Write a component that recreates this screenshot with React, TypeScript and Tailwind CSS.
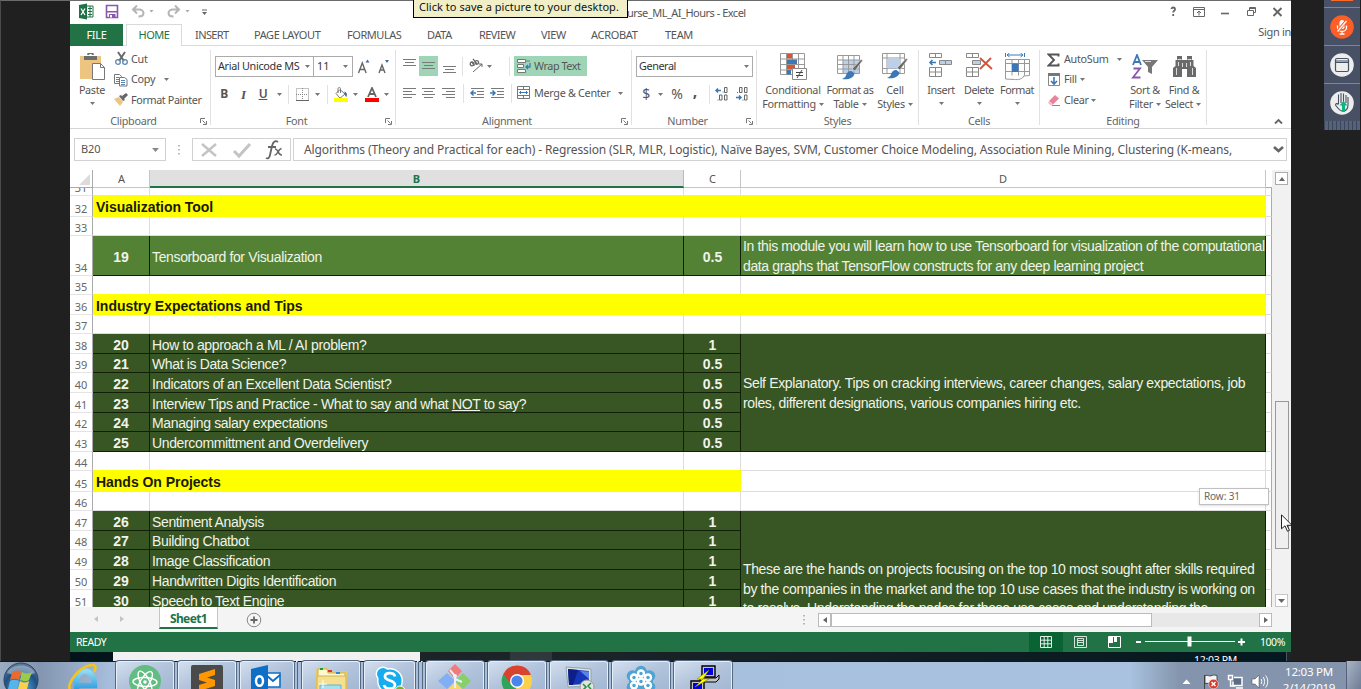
import type { ReactNode } from "react";

type Kids = { className?: string; children?: ReactNode };

const Slot = ({ className = "", children }: Kids) => (
  <div className={`flex shrink-0 items-center justify-center ${className}`}>{children}</div>
);

const Caret = ({ className = "" }: { className?: string }) => (
  <svg className={`shrink-0 ${className}`} width="5" height="3" viewBox="0 0 5 3">
    <path d="M0 0h5L2.5 3z" fill="#777" />
  </svg>
);

const Launcher = () => (
  <svg width="7" height="7" viewBox="0 0 7 7" fill="none" stroke="#777">
    <path d="M.5 5V.5H5M2.5 2.5l3 3M6.500 3v3.500H3" />
  </svg>
);

const Sep = () => <div className="h-[19px] w-px shrink-0 bg-[#e1e1e1]" />;

function Group({ label, className, launcher, labelClass = "", children }: Kids & { label: string; launcher?: boolean; labelClass?: string }) {
  return (
    <div className={`mt-[4px] flex h-[75px] shrink-0 flex-col border-r border-[#e1e1e1] ${className}`}>
      <div className="h-[64px] shrink-0">{children}</div>
      <div className="flex h-[14px] shrink-0 items-center justify-center text-[#666]">
        <span className={`flex-1 text-center ${labelClass}`}>{label}</span>
        {launcher && (
          <div className="-ml-[11px] mr-[3px]">
            <Launcher />
          </div>
        )}
      </div>
    </div>
  );
}

const Lines = ({ rows }: { rows: [number, number, number][] }) => (
  <svg width="14" height="20" viewBox="0 0 14 20" stroke="#7a7a7a">
    {rows.map(([x1, x2, y]) => (
      <path key={y} d={`M${x1} ${y}H${x2}`} />
    ))}
  </svg>
);

function BigButton({ icon, top, bottom, className = "", topClass = "", bottomClass = "" }: { icon: ReactNode; top: string; bottom?: string; className?: string; topClass?: string; bottomClass?: string }) {
  return (
    <div className={`flex shrink-0 flex-col items-center whitespace-nowrap ${className}`}>
      <div className="flex h-[31px] items-end justify-center pt-[2px]">{icon}</div>
      <div className={`mt-[2px] flex h-[14px] items-center ${topClass}`}>{top}</div>
      <div className="flex h-[14px] items-center gap-[3px]">
        {bottom && <span className={bottomClass}>{bottom}</span>}
        <Caret className={bottom ? "" : "-mt-[2px]"} />
      </div>
    </div>
  );
}

/* ---------- title bar and tabs ---------- */

function TitleBar() {
  return (
    <div className="flex h-[23px] shrink-0 items-center">
      <svg width="150" height="23" viewBox="70 1 150 23">
        <path d="M79 5l8-1.500v16L79 18z" fill="#1f7245" />
        <path d="M87 6h6v11h-6" fill="#fff" stroke="#1f7245" />
        <path d="M88 8.500h4M88 11.500h4M88 14.500h4M90 6v11" stroke="#1f7245" />
        <path d="M81 8.500l4 6.500M85 8.500l-4 6.500" stroke="#fff" strokeWidth="1.300" />
        <path d="M106.500 5.500h11v12h-11z" fill="#fff" stroke="#8957ab" strokeWidth="1.600" />
        <path d="M107 11h10v1.500h-10z" fill="#8957ab" />
        <path d="M109 14h6.500v4H109z" fill="#8957ab" />
        <path d="M110 15h2v2.500h-2z" fill="#fff" />
        <g fill="none" stroke="#b5b5b5" strokeWidth="2">
          <path d="M137 5l-4 4 4 4M133 9h6c3 0 4.500 2 4.500 3.500 0 2.500-2 3.500-5 3.500" transform="translate(0 .5)" />
          <path d="M175 5l4 4-4 4M179 9h-6c-3 0-4.500 2-4.500 3.500 0 2.500 2 3.500 5 3.500" transform="translate(0 .5)" />
        </g>
        <path d="M149.500 10h4l-2 2.500zM185.500 10h4l-2 2.500z" fill="#aaa" />
        <path d="M202 9.500h5v1h-5zM202 12h5l-2.500 3z" fill="#666" />
      </svg>
      <span className="ml-[407px] w-[130px] whitespace-nowrap text-[11px] leading-none tracking-[-0.5px] text-[#555]">urse_ML_AI_Hours - Excel</span>
      <svg className="ml-auto" width="131" height="23" viewBox="1160 1 131 23" fill="none" stroke="#666">
        <path d="M1171.500 9c0-1 .7-1.500 1.700-1.500s1.800.6 1.800 1.700c0 1.600-1.800 1.500-1.800 3.300M1173.200 14v2" strokeWidth="1.800" />
        <path d="M1193.500 7.500h11v9h-11zM1193.500 9.500h11M1199 15.500v-4M1197 13l2-2 2 2" />
        <path d="M1221 13.500h8" strokeWidth="1.600" />
        <path d="M1247.500 10.500h6v5h-6zM1249.500 10V7.500h6v5H1254M1249.500 8.500h6" />
        <path d="M1273.500 8l8 8M1281.500 8l-8 8" strokeWidth="1.900" />
      </svg>
    </div>
  );
}

function Tabs() {
  return (
    <div className="flex h-[22px] shrink-0 items-stretch whitespace-nowrap text-[11px] text-[#555]">
      <Slot className="w-[53px] bg-[#217346] tracking-[-0.3px] text-white">FILE</Slot>
      <div className="w-[3px] border-b border-[#dadada]" />
      <Slot className="w-[56px] border-x border-t border-[#dadada] tracking-[-0.45px] text-[#217346]">HOME</Slot>
      <div className="flex flex-1 items-center border-b border-[#dadada] pt-[2px]">
        <span className="ml-[13px] w-[59px] tracking-[-0.6px]">INSERT</span>
        <span className="w-[93px] tracking-[-0.4px]">PAGE LAYOUT</span>
        <span className="w-[80px] tracking-[-0.45px]">FORMULAS</span>
        <span className="w-[52px] tracking-[-0.4px]">DATA</span>
        <span className="w-[62px] tracking-[-0.6px]">REVIEW</span>
        <span className="w-[50px] tracking-[-0.5px]">VIEW</span>
        <span className="w-[74px] tracking-[-0.3px]">ACROBAT</span>
        <span className="w-[60px] tracking-[-0.3px]">TEAM</span>
        <span className="-mt-[6px] ml-auto tracking-[-0.3px]">Sign in</span>
      </div>
    </div>
  );
}

/* ---------- ribbon ---------- */

function Clipboard() {
  return (
    <Group label="Clipboard" launcher className="w-[141px]" labelClass="-ml-[14px]">
      <div className="flex">
        <BigButton
          className="ml-[8px] w-[28px]"
          top="Paste"
          icon={
            <svg width="28" height="28" viewBox="80 53 28 28">
              <path d="M82 56h21v23H82z" fill="#edc581" />
              <path d="M86 56h13v4H86z" fill="#6d6d6d" />
              <path d="M90 55a2.500 2 0 015 0" fill="none" stroke="#6d6d6d" strokeWidth="1.800" />
              <path d="M94.500 63.500h8l4 4v12h-12z" fill="#fff" stroke="#777" />
              <path d="M102.500 63.500v4h4" fill="none" stroke="#777" />
            </svg>
          }
        />
        <div className="-mt-px ml-[8px] flex flex-col">
          <div className="flex h-[20px] items-center">
            <svg width="17" height="16" viewBox="0 0 17 16" fill="none">
              <path d="M4 1l6 9M11 1l-6 9" stroke="#6a6a6a" strokeWidth="2" />
              <circle cx="4" cy="11" r="2.300" stroke="#5b87b5" strokeWidth="1.300" />
              <circle cx="11" cy="11" r="2.300" stroke="#5b87b5" strokeWidth="1.300" />
            </svg>
            Cut
          </div>
          <div className="flex h-[21px] items-center">
            <svg width="17" height="14" viewBox="0 0 17 14" fill="#fff" stroke="#777">
              <path d="M.5 1.500h5l2 2v7h-7z" />
              <path d="M5.500 4.500h5l2.500 2v6.500H5.500z" />
              <path d="M2 4.500h3M2 6.500h3M2 8.500h3M7 7.500h4M7 9.500h4M7 11.500h4" stroke="#5b87b5" />
            </svg>
            Copy
            <Caret className="ml-[9px]" />
          </div>
          <div className="flex h-[20px] items-center whitespace-nowrap tracking-[-0.38px]">
            <svg width="17" height="14" viewBox="0 0 17 14">
              <path d="M0 6l5-2 4 5-3 4z" fill="#edc581" />
              <path d="M5 3l2-1 4 5-2 1zM8 3l4-3 2 2-4 4z" fill="#666" />
            </svg>
            Format Painter
          </div>
        </div>
      </div>
    </Group>
  );
}

function FontGroup() {
  return (
    <Group label="Font" launcher className="w-[185px]" labelClass="-ml-[14px]">
      <div className="flex items-center pt-[6px]">
        <div className="ml-[4px] flex h-[21px] w-[99px] items-center whitespace-nowrap border border-[#ababab] pl-[2px] text-[#333]">
          <span className="w-[87px] tracking-[-0.3px]">Arial Unicode MS</span>
          <Caret />
        </div>
        <div className="flex h-[21px] w-[39px] items-center border border-l-0 border-[#ababab] pl-[3px] text-[#333]">
          <span className="w-[26px] tracking-normal">11</span>
          <Caret />
        </div>
        <svg className="ml-[4px]" width="34" height="20" viewBox="0 0 34 20" fill="none" stroke="#666">
          <path d="M1.500 16L5.300 6l3.800 10M3 12.500h5" strokeWidth="1.400" />
          <path d="M8.500 5.500h4l-2-3z" fill="#40699c" stroke="none" />
          <path d="M22 16l3-8 3 8M23.200 13h4" strokeWidth="1.400" />
          <path d="M28 3h4l-2 3z" fill="#40699c" stroke="none" />
        </svg>
      </div>
      <div className="mt-[7px] flex h-[20px] items-center text-[#555]">
        <Slot className="ml-[3px] w-[20px] text-[12px] font-bold">B</Slot>
        <Slot className="w-[19px] font-['Liberation_Serif',serif] text-[13px] font-bold italic">I</Slot>
        <Slot className="w-[20px] text-[12px] font-semibold underline">U</Slot>
        <Slot className="w-[12px]"><Caret /></Slot>
        <Slot className="w-[7px]"><Sep /></Slot>
        <Slot className="w-[21px]">
          <svg width="13" height="13" viewBox="0 0 13 13" fill="none" stroke="#888">
            <path d="M.5.5h12v12H.5zM6.500 0v12M0 6.500h12" strokeDasharray="1 1" />
            <path d="M0 12.500h13" stroke="#666" />
          </svg>
        </Slot>
        <Slot className="w-[11px]"><Caret className="mr-[2px]" /></Slot>
        <Slot className="w-[7px]"><Sep /></Slot>
        <Slot className="w-[20px]">
          <svg width="16" height="15" viewBox="0 0 16 15">
            <path d="M3 6.500l4-4 5 4.500-5 4.200z" fill="#fff" stroke="#777" />
            <path d="M5 6V1.500C5 .3 7.500.3 7.500 1.500V6" fill="none" stroke="#777" />
            <path d="M11.500 4.500c2 .5 3 2.500 2 5.500-1.500-.5-2-3-2-5.500z" fill="#40699c" />
            <path d="M1 11h14v4H1z" fill="#ff0" />
          </svg>
        </Slot>
        <Slot className="w-[8px]"><Caret /></Slot>
        <Slot className="w-[25px]">
          <svg width="14" height="15" viewBox="0 0 14 15">
            <path d="M3 10l4-9 4 9M4.500 7h5" fill="none" stroke="#666" strokeWidth="1.800" />
            <path d="M0 11h14v4H0z" fill="#f00" />
          </svg>
        </Slot>
        <Caret />
      </div>
    </Group>
  );
}

const Indent = ({ out }: { out?: boolean }) => (
  <svg width="15" height="12" viewBox="0 0 15 12" stroke="#7a7a7a">
    <path d="M1 1.500h13M7 4.500h7M7 7.500h7M1 10.500h13" />
    <path d={out ? "M6 6H1M3.500 3.500L1 6l2.500 2.500" : "M0 6h5M2.500 3.500L5 6 2.500 8.500"} fill="none" stroke="#3c78b5" strokeWidth="1.500" />
  </svg>
);

function Alignment() {
  return (
    <Group label="Alignment" launcher className="w-[236px]" labelClass="-ml-[14px]">
      <div className="flex items-center pt-[6px]">
        <Slot className="ml-[4px] w-[19px]"><Lines rows={[[0, 13, 3.5], [2, 11, 6.5], [0, 13, 9.5]]} /></Slot>
        <Slot className="h-[20px] w-[19px] bg-[#9fd5b7]"><Lines rows={[[0, 13, 6.5], [2, 11, 9.5], [0, 13, 12.5]]} /></Slot>
        <Slot className="ml-[2px] w-[19px]"><Lines rows={[[0, 13, 10.5], [2, 11, 13.5], [0, 13, 16.5]]} /></Slot>
        <Slot className="w-[7px]"><Sep /></Slot>
        <Slot className="w-[20px]">
          <svg width="16" height="16" viewBox="0 0 16 16" fill="none" stroke="#666">
            <circle cx="4" cy="6" r="1.800" strokeWidth="1.300" />
            <path d="M3.500 3.500l3 4M5 .8l4 5" strokeWidth="1.300" />
            <circle cx="8.800" cy="4.500" r="1.800" strokeWidth="1.300" />
            <path d="M5 14l9-8M14 9V6h-3" />
          </svg>
        </Slot>
        <Slot className="w-[6px]"><Caret /></Slot>
        <Slot className="ml-[13px] w-[9px]"><Sep /></Slot>
        <div className="flex h-[20px] w-[73px] items-center whitespace-nowrap bg-[#9fd5b7] pl-[3px]">
          <svg className="mr-[3px]" width="14" height="14" viewBox="0 0 14 14" fill="#fff" stroke="#777">
            <path d="M.5.5h8v3h-8zM.5 5.500h6v3h-6zM.5 10.500h8v3h-8zM8 2h5" />
            <path d="M13 4v4H9M11 6L9 8l2 2" fill="none" stroke="#3c78b5" strokeWidth="1.300" />
          </svg>
          <span className="tracking-[-0.45px]">Wrap Text</span>
        </div>
      </div>
      <div className="mt-[7px] flex h-[20px] items-center">
        <Slot className="ml-[4px] w-[19px]"><Lines rows={[[0, 13, 5.5], [0, 9, 8.5], [0, 13, 11.5], [0, 9, 14.5]]} /></Slot>
        <Slot className="w-[20px]"><Lines rows={[[0, 13, 5.5], [2, 11, 8.5], [0, 13, 11.5], [2, 11, 14.5]]} /></Slot>
        <Slot className="w-[20px]"><Lines rows={[[0, 13, 5.5], [4, 13, 8.5], [0, 13, 11.5], [4, 13, 14.5]]} /></Slot>
        <Slot className="w-[8px]"><Sep /></Slot>
        <Slot className="w-[20px]"><Indent out /></Slot>
        <Slot className="w-[20px]"><Indent /></Slot>
        <Slot className="w-[8px]"><Sep /></Slot>
        <svg className="ml-[2px] mr-[3px]" width="14" height="14" viewBox="0 0 14 14" fill="#fff" stroke="#777">
          <path d="M.5.5h12v12H.5zM.5 3.500h12M.5 9.500h12M6.500.5v3M6.500 9.500v3" />
          <path d="M2.500 6.500h8M4 5L2.500 6.500 4 8M9 5l1.500 1.500L9 8" stroke="#3c78b5" fill="none" />
        </svg>
        <span className="w-[84px] whitespace-nowrap pt-px tracking-[-0.3px]">Merge &amp; Center</span>
        <Caret />
      </div>
    </Group>
  );
}

function NumberGroup() {
  return (
    <Group label="Number" launcher className="w-[125px]" labelClass="-ml-[14px]">
      <div className="flex pt-[6px]">
        <div className="ml-[4px] flex h-[21px] w-[117px] items-center border border-[#ababab] pl-[2px] text-[#333]">
          <span className="w-[105px] tracking-[-0.4px]">General</span>
          <Caret />
        </div>
      </div>
      <div className="mt-[7px] flex h-[20px] items-center text-[#555]">
        <Slot className="ml-[8px] w-[12px] text-[14px]">$</Slot>
        <Slot className="w-[16px]"><Caret /></Slot>
        <Slot className="w-[18px] text-[14px]">%</Slot>
        <Slot className="w-[18px] pb-[6px] text-[16px] font-bold leading-none">,</Slot>
        <Slot className="w-[10px]"><Sep /></Slot>
        <svg className="ml-[1px]" width="36" height="14" viewBox="0 0 36 14" fill="none" stroke="#666">
          <path d="M6 3.500H1M3 1.500L1 3.500l2 2" stroke="#3c78b5" strokeWidth="1.500" />
          <path d="M9.500.5h2.500v5H9.500zM4.500 8h2.500v5H4.500zM9.500 8h2.500v5H9.500zM7.500 5h1M2.500 13h1" />
          <path d="M24.500.5h2.500v5h-2.500zM29.500.5h2.500v5h-2.500zM29.500 8h2.500v5h-2.500zM22 5.500h1M27.500 13h1" />
          <path d="M21 10.500h5M24 8.500l2 2-2 2" stroke="#3c78b5" strokeWidth="1.500" />
        </svg>
      </div>
    </Group>
  );
}

const Brush = () => (
  <>
    <path d="M27 6l-8 11-3-2L25 5.500z" fill="#6a6a6a" stroke="#fff" strokeWidth=".5" />
    <path d="M15.500 17l3 2.500C18 24 12 26 6 25c3-1 4-3 4.500-5s3-3.500 5-3z" fill="#3c78b5" />
  </>
);

function Styles() {
  return (
    <Group label="Styles" className="w-[162px]">
      <div className="flex">
        <BigButton
          className="ml-[6px] w-[60px]"
          top="Conditional"
          bottom="Formatting"
          topClass="tracking-[-0.25px]"
          bottomClass="tracking-[-0.3px]"
          icon={
            <svg width="28" height="28" viewBox="0 0 28 28">
              <path d="M1.500.5h24v21h-24zM1.500 6h24M1.500 11.500h24M1.500 17h24M7.500.5v21M13.500.5v21M19.500.5v21" fill="#fff" stroke="#999" />
              <path d="M8 1h5v4.500H8zM8 12h8v4.500H8z" fill="#d65532" />
              <path d="M8 6.500h10v4.500H8zM8 17h4v4.500H8z" fill="#3c78b5" />
              <path d="M13.500 15.500h14v11h-14z" fill="#fff" stroke="#888" />
              <path d="M17 19.500h7M17 22.500h7M23 17l-5 8" stroke="#444" />
            </svg>
          }
        />
        <BigButton
          className="w-[54px]"
          top="Format as"
          bottom="Table"
          topClass="tracking-[-0.4px]"
          icon={
            <svg width="28" height="27" viewBox="0 0 28 27">
              <path d="M1.500 1.500h22v18h-22z" fill="#fff" stroke="#999" />
              <path d="M7 6h16v13H7z" fill="#bdd0e9" />
              <path d="M1.500 6h22M1.500 10.500h22M1.500 15h22M7 1.500v18M12.500 1.500v18M18 1.500v18" stroke="#999" />
              <Brush />
            </svg>
          }
        />
        <BigButton
          className="-ml-[2px] w-[40px]"
          top="Cell"
          bottom="Styles"
          icon={
            <svg width="28" height="28" viewBox="0 0 28 28">
              <path d="M1.500.5h22v20h-22zM1.500 5h22M1.500 15.500h22M6 .5v20M19 .5v20" fill="#fff" stroke="#999" />
              <path d="M6.500 5.500h12v10h-12z" fill="#bdd0e9" />
              <Brush />
            </svg>
          }
        />
      </div>
    </Group>
  );
}

const CellBlocks = () => (
  <path d="M1.500.5h12v4h-12zM7.500.5v4M1.500 14.500h12v9h-12zM7.500 14.500v9M1.500 19h12" fill="#fff" stroke="#888" />
);

function Cells() {
  return (
    <Group label="Cells" className="w-[121px]">
      <div className="flex">
        <BigButton
          className="ml-[4px] w-[36px]"
          top="Insert"
          topClass="tracking-[-0.4px]"
          icon={
            <svg width="26" height="28" viewBox="0 0 26 28">
              <CellBlocks />
              <path d="M11.500 7.500h12v4h-12zM17.500 7.500v4" fill="#bdd0e9" stroke="#888" />
              <path d="M8 9.500H2M4.500 7L2 9.500 4.500 12" fill="none" stroke="#3c78b5" strokeWidth="1.600" />
            </svg>
          }
        />
        <BigButton
          className="w-[40px]"
          top="Delete"
          topClass="tracking-[-0.5px]"
          icon={
            <svg width="28" height="28" viewBox="0 0 28 28">
              <CellBlocks />
              <path d="M7.500 7.500h8v4h-8z" fill="#bdd0e9" stroke="#888" />
              <path d="M15 5l12 11M26 5L15 16" stroke="#d0563c" strokeWidth="1.900" />
            </svg>
          }
        />
        <BigButton
          className="w-[36px]"
          top="Format"
          topClass="tracking-[-0.45px]"
          icon={
            <svg width="27" height="28" viewBox="0 0 27 28" fill="none">
              <path d="M1.500 0v4M20.500 0v4M3 2h16M5.500 0L3 2l2.500 2M16.500 0L19 2l-2.500 2" stroke="#3c78b5" />
              <path d="M1.500 6.500h24v16l-6 .5c0 3-6 4-9 3.500l-9-.5zM1.500 10.500h24M1.500 18.500h24M8 6.500v16M14.500 6.500v16M20.500 6.500v16" fill="#fff" stroke="#999" />
              <path d="M8 10.500h6.500V19H8z" fill="#3c78b5" />
            </svg>
          }
        />
      </div>
    </Group>
  );
}

function Editing() {
  return (
    <Group label="Editing" className="w-[167px]">
      <div className="flex">
        <div className="ml-[7px] flex w-[79px] flex-col whitespace-nowrap">
          <div className="flex h-[19px] items-center">
            <svg className="mr-[4px]" width="13" height="14" viewBox="0 0 13 14">
              <path d="M11.500 3.500v-2H1.500L7 7l-5.500 5.500h10v-2" fill="none" stroke="#555" strokeWidth="1.900" />
            </svg>
            <span className="w-[53px]">AutoSum</span>
            <Caret />
          </div>
          <div className="flex h-[21px] items-center">
            <svg className="ml-[1px] mr-[4px]" width="12" height="13" viewBox="0 0 12 13">
              <path d="M.5.500h11v12H.5z" fill="#fff" stroke="#888" />
              <path d="M0 0h12v3H0z" fill="#777" />
              <path d="M6 4v7M3 8l3 3 3-3" fill="none" stroke="#3c78b5" strokeWidth="1.600" />
            </svg>
            Fill
            <Caret className="ml-[3px]" />
          </div>
          <div className="flex h-[20px] items-center">
            <svg className="ml-[1px] mr-[4px]" width="12" height="12" viewBox="0 0 12 12">
              <path d="M1 7l6-6 4 3.500-6 6z" fill="#e9839a" />
              <path d="M1 7l4 3.500-2 1L0 9z" fill="#f3bcc8" />
              <path d="M4 11.500h8" stroke="#888" />
            </svg>
            Clear
            <Caret className="ml-[2px]" />
          </div>
        </div>
        <BigButton
          className="w-[38px]"
          top="Sort &"
          bottom="Filter"
          icon={
            <svg width="28" height="27" viewBox="0 0 28 27" fill="none">
              <path d="M2 11L6 1l4 10M3.500 8h5" stroke="#3c78b5" strokeWidth="1.800" />
              <path d="M2.500 14.500H9l-7 9h7.500" stroke="#8957ab" strokeWidth="1.800" />
              <path d="M11 6h16l-6 7v7l-4-2v-5z" fill="#777" />
              <path d="M14 7.500h6" stroke="#ddd" />
            </svg>
          }
        />
        <BigButton
          className="w-[38px]"
          top="Find &"
          bottom="Select"
          topClass="pl-[2px]"
          icon={
            <svg className="ml-[2px] mb-[2px]" width="25" height="24" viewBox="0 0 25 24">
              <path d="M5 1h5v4h5V1h5v4h1.500v6l2.500 2v9h-9v-8h-5v8H1v-9l2.500-2V5H5z" fill="#6a6a6a" />
              <path d="M5.500 4.500h4M15.500 4.500h4M4.500 13v7M20.500 13v7M10.500 8v4M14.500 8v4M6.500 7v4M18.500 7v4" stroke="#ddd" />
            </svg>
          }
        />
      </div>
    </Group>
  );
}

function Ribbon() {
  return (
    <div className="flex h-[83px] shrink-0 border-b border-[#d5d5d5] text-[10.8px] leading-none tracking-[-0.3px] text-[#555]">
      <Clipboard />
      <FontGroup />
      <Alignment />
      <NumberGroup />
      <Styles />
      <Cells />
      <Editing />
      <div className="flex flex-1 items-end justify-end pb-[3px] pr-[8px]">
        <svg width="9" height="7" viewBox="0 0 9 7">
          <path d="M1 5.500L4.500 2 8 5.500" fill="none" stroke="#666" strokeWidth="1.800" />
        </svg>
      </div>
    </div>
  );
}

function FormulaBar() {
  return (
    <div className="flex h-[41px] shrink-0 items-start pt-[9px] text-[12px] text-[#555]">
      <div className="ml-[4px] flex h-[23px] w-[92px] items-center border border-[#d2d2d2] pl-[6px]">
        <span className="w-[71px] text-[11px] tracking-[-0.1px]">B20</span>
        <svg width="7" height="4" viewBox="0 0 7 4"><path d="M0 0h7L3.500 4z" fill="#888" /></svg>
      </div>
      <Slot className="h-[23px] w-[26px]">
        <svg width="2" height="10" viewBox="0 0 2 10"><path d="M1 0v10" stroke="#999" strokeWidth="1.300" strokeDasharray="1.500 2.500" /></svg>
      </Slot>
      <div className="h-[23px] w-[99px] border border-[#d2d2d2]">
        <svg width="97" height="21" viewBox="0 0 97 21" fill="none">
          <path d="M9 5l14 12M23 5L9 17" stroke="#c4c4c4" strokeWidth="2.400" />
          <path d="M41 12l5 5L57 5" stroke="#c4c4c4" strokeWidth="3" />
          <path d="M85 3c-3-2-5 0-6 4l-2 9c-.5 3-2 4-4 3M75 8h8" stroke="#666" strokeWidth="1.800" />
          <path d="M82 10c3-1 3 7 7 6M88.500 9.500c-3 0-4 7-7 6.500" stroke="#666" strokeWidth="1.500" />
        </svg>
      </div>
      <div className="ml-[2px] flex h-[23px] w-[994px] items-center border border-[#d2d2d2] pl-[10px]">
        <span className="w-[969px] whitespace-nowrap tracking-[-0.12px]">
          Algorithms (Theory and Practical for each) - Regression (SLR, MLR, Logistic), Naïve Bayes, SVM, Customer Choice Modeling, Association Rule Mining, Clustering (K-means,
        </span>
        <svg width="11" height="7" viewBox="0 0 11 7"><path d="M1 1l4.500 4L10 1" fill="none" stroke="#666" strokeWidth="2.600" /></svg>
      </div>
    </div>
  );
}

/* ---------- worksheet ---------- */

type Row = { n: number; kind: "blank" | "title" | "item"; title?: string; no?: string; topic?: ReactNode; hours?: string; tone?: string };

const rows: Row[] = [
  { n: 31, kind: "blank" },
  { n: 32, kind: "title", title: "Visualization Tool" },
  { n: 33, kind: "blank" },
  { n: 34, kind: "item", no: "19", topic: "Tensorboard for Visualization", hours: "0.5", tone: "bg-[#548235]" },
  { n: 35, kind: "blank" },
  { n: 36, kind: "title", title: "Industry Expectations and Tips" },
  { n: 37, kind: "blank" },
  { n: 38, kind: "item", no: "20", topic: "How to approach a ML / AI problem?", hours: "1" },
  { n: 39, kind: "item", no: "21", topic: "What is Data Science?", hours: "0.5" },
  { n: 40, kind: "item", no: "22", topic: "Indicators of an Excellent Data Scientist?", hours: "0.5" },
  { n: 41, kind: "item", no: "23", topic: <>Interview Tips and Practice - What to say and what <u>NOT</u> to say?</>, hours: "0.5" },
  { n: 42, kind: "item", no: "24", topic: "Managing salary expectations", hours: "0.5" },
  { n: 43, kind: "item", no: "25", topic: "Undercommittment and Overdelivery", hours: "0.5" },
  { n: 44, kind: "blank" },
  { n: 45, kind: "title", title: "Hands On Projects" },
  { n: 46, kind: "blank" },
  { n: 47, kind: "item", no: "26", topic: "Sentiment Analysis", hours: "1" },
  { n: 48, kind: "item", no: "27", topic: "Building Chatbot", hours: "1" },
  { n: 49, kind: "item", no: "28", topic: "Image Classification", hours: "1" },
  { n: 50, kind: "item", no: "29", topic: "Handwritten Digits Identification", hours: "1" },
  { n: 51, kind: "item", no: "30", topic: "Speech to Text Engine", hours: "1" },
];

const gridLine = "border-b border-r border-[#dcdcdc]";
const cellLine = "flex items-center border-b border-r border-[#111f08] pt-[2px] text-[#f0f3ea]";

function SheetRow({ row }: { row: Row }) {
  const head = (
    <div className="col-start-1 flex items-end justify-end border-b border-r border-b-[#e4e4e4] border-r-[#ababab] pr-[5px] font-['Noto_Sans',sans-serif] text-[11px] leading-[15px] tracking-[-0.2px] text-[#666]">
      {row.n}
    </div>
  );
  const edge = <div className="border-b border-r border-b-[#dcdcdc] border-r-[#ababab] bg-white" />;
  if (row.kind === "title") {
    const short = row.n === 45;
    return (
      <>
        {head}
        <div className={`-mt-px flex items-center whitespace-nowrap bg-[#ff0] pl-[3px] pt-[2px] font-bold tracking-[-0.03px] text-[#1a1a00] ${short ? "col-span-3" : "col-span-4"}`}>{row.title}</div>
        {short && <div className={gridLine} />}
        {edge}
      </>
    );
  }
  if (row.kind === "blank") {
    return (
      <>
        {head}
        <div className={gridLine} />
        <div className={gridLine} />
        <div className={gridLine} />
        <div className={gridLine} />
        {edge}
      </>
    );
  }
  const tone = row.tone ?? "bg-[#375623]";
  return (
    <>
      {head}
      <div className={`${cellLine} ${tone} justify-center font-bold`}>{row.no}</div>
      <div className={`${cellLine} ${tone} whitespace-nowrap pl-[2px] tracking-[-0.36px]`}><span>{row.topic}</span></div>
      <div className={`${cellLine} ${tone} justify-center pl-px font-bold`}>{row.hours}</div>
      {row.n === 34 && (
        <div className={`${cellLine} ${tone} whitespace-nowrap pl-[2px] leading-[19.6px] tracking-[-0.37px]`}>
          <span>
            In this module you will learn how to use Tensorboard for visualization of the computational
            <br />
            data graphs that TensorFlow constructs for any deep learning project
          </span>
        </div>
      )}
      {row.n === 38 && (
        <div className={`${cellLine} ${tone} row-span-6 whitespace-nowrap pl-[2px] leading-[19.6px] tracking-[-0.37px]`}>
          <span>
            Self Explanatory. Tips on cracking interviews, career changes, salary expectations, job
            <br />
            roles, different designations, various companies hiring etc.
          </span>
        </div>
      )}
      {row.n === 47 && (
        <div className="row-span-5 overflow-hidden whitespace-nowrap border-r border-[#111f08] bg-[#375623] pl-[2px] pt-[49px] leading-[19.6px] tracking-[-0.37px] text-[#f0f3ea]">
          These are the hands on projects focusing on the top 10 most sought after skills required
          <br />
          by the companies in the market and the top 10 use cases that the industry is working on
          <br />
          to resolve. Understanding the nodes for these use cases and understanding the
        </div>
      )}
      <div className="col-start-6 border-b border-r border-b-[#dcdcdc] border-r-[#ababab] bg-white" />
    </>
  );
}

function Sheet() {
  return (
    <div className="flex h-[437px] shrink-0">
      <div className="flex w-[1202px] flex-col">
        <div className="flex h-[18px] shrink-0 text-[11px] leading-none text-[#555]">
          <div className="flex w-[23px] items-end justify-end border-b border-r border-[#ababab] pb-[2px] pr-[2px]">
            <svg width="11" height="11" viewBox="0 0 11 11"><path d="M11 0v11H0z" fill="#dcdcdc" /></svg>
          </div>
          <Slot className="w-[57px] border-b border-r border-[#c6c6c6] pl-px">A</Slot>
          <Slot className="w-[534px] border-b-2 border-r border-b-[#217346] border-r-[#bbb] bg-[#e0e0e0] font-bold text-[#217346]">B</Slot>
          <Slot className="w-[57px] border-b border-r border-[#c6c6c6] pl-px">C</Slot>
          <Slot className="w-[525px] border-b border-r border-[#c6c6c6]">D</Slot>
          <div className="w-[6px] border-b border-[#ababab]" />
        </div>
        <div className="grid h-[419px] grid-cols-[23px_57px_534px_57px_525px_6px] grid-rows-[8px_21px_19px_40px_19px_20px_19px_20px_19px_20px_20px_19px_20px_19px_21px_19px_20px_19px_20px_20px_20px] overflow-hidden font-['Liberation_Sans',Arial,sans-serif] text-[14px] leading-none">
          {rows.map((row) => (
            <SheetRow key={row.n} row={row} />
          ))}
        </div>
      </div>
      <div className="flex w-[19px] flex-col items-center bg-[#f1f1f1]">
        <Slot className="mt-[2px] h-[13px] w-[13px] border border-[#ababab] bg-white">
          <svg width="6" height="4" viewBox="0 0 6 4"><path d="M0 4h6L3 0z" fill="#666" /></svg>
        </Slot>
        <div className="mt-[216px] h-[148px] w-[14px] border border-[#999] bg-[#efefef]" />
        <Slot className="mb-0 mt-auto h-[13px] w-[13px] border border-[#c6c6c6] bg-white">
          <svg width="7" height="4" viewBox="0 0 7 4"><path d="M0 0h7L3.500 4z" fill="#666" /></svg>
        </Slot>
      </div>
    </div>
  );
}

function SheetTabs() {
  return (
    <div className="flex h-[25px] shrink-0 items-start bg-[#f4f4f4]">
      <svg width="89" height="24" viewBox="0 0 89 24" fill="#c4c4c4">
        <path d="M28 9v6l-4-3zM50 9v6l4-3z" />
      </svg>
      <Slot className="h-[22px] w-[59px] border-x border-b-2 border-x-[#c6c6c6] border-b-[#217346] bg-white pt-[3px] text-[12px] font-bold tracking-[-0.6px] text-[#217346]">Sheet1</Slot>
      <svg className="ml-[28px] mt-[5px]" width="16" height="16" viewBox="0 0 16 16" fill="none">
        <circle cx="8" cy="8" r="6.800" stroke="#888" />
        <path d="M8 4.500v7M4.500 8h7" stroke="#666" strokeWidth="1.800" />
      </svg>
      <div className="ml-auto flex items-center pr-[19px] pt-[6px]">
        <svg className="mr-[13px]" width="2" height="10" viewBox="0 0 2 10"><path d="M1 0v10" stroke="#999" strokeWidth="1.300" strokeDasharray="1.500 2.500" /></svg>
        <Slot className="h-[14px] w-[13px] border border-[#bbb] bg-white">
          <svg width="4" height="6" viewBox="0 0 4 6"><path d="M4 0v6L0 3z" fill="#666" /></svg>
        </Slot>
        <div className="h-[14px] w-[321px] border border-[#bbb] bg-white" />
        <div className="h-[14px] w-[107px] bg-[#e8e8e8]" />
        <Slot className="h-[14px] w-[13px] border border-[#bbb] bg-white">
          <svg width="4" height="6" viewBox="0 0 4 6"><path d="M0 0v6l4-3z" fill="#666" /></svg>
        </Slot>
      </div>
    </div>
  );
}

function StatusBar() {
  return (
    <div className="flex h-[20px] shrink-0 items-center bg-[#217346] text-[10.5px] leading-none tracking-[-0.45px] text-white">
      <span className="ml-[6px]">READY</span>
      <Slot className="ml-auto h-[20px] w-[34px] bg-[#0a6332]">
        <svg width="12" height="12" viewBox="0 0 12 12" fill="none" stroke="#e4f0e9"><path d="M.5.500h11v11H.5zM0 4.200h12M0 7.800h12M4.200 0v12M7.800 0v12" /></svg>
      </Slot>
      <Slot className="w-[35px]">
        <svg width="13" height="12" viewBox="0 0 13 12" fill="none" stroke="#d4e6db"><path d="M.5.500h12v11H.5zM3.500 2.500h6v7h-6zM4 4.500h5M4 6.500h5" /></svg>
      </Slot>
      <Slot className="w-[33px]">
        <svg width="13" height="12" viewBox="0 0 13 12" fill="none" stroke="#fff"><path d="M.5.500h12v11H.5z" /><path d="M1 1h4v6H1zM6 1h3v5H6z" fill="#fff" stroke="none" /></svg>
      </Slot>
      <svg className="ml-[4px]" width="112" height="20" viewBox="0 0 112 20" fill="none" stroke="#fff">
        <path d="M1 10h5" strokeWidth="2" />
        <path d="M10 9.500h90" />
        <path d="M54.500 4.500v10" strokeWidth="4" />
        <path d="M103 10h7M106.500 6.500v7" strokeWidth="2" />
      </svg>
      <span className="ml-[13px] w-[31px]">100%</span>
    </div>
  );
}

function RemoteEdge() {
  return (
    <div className="flex h-[9px] shrink-0 overflow-hidden bg-[#1c2427]">
      <div className="w-[43px] bg-[#04141b]" />
      <div className="w-[307px] bg-[#f1f1f1]" />
      <div className="w-[90px]" />
      <div className="w-[42px] bg-[#2f383b]" />
      <div className="flex-1 bg-gradient-to-r from-[#1c2427] to-[#04181f] pl-[642px] pt-[3px] text-[10.5px] leading-[10px] tracking-[-0.3px] text-white">12:03 PM</div>
      <div className="mr-[4px] w-px bg-[#4c585c]" />
    </div>
  );
}

/* ---------- meeting control panel ---------- */

function MeetingPanel() {
  return (
    <div className="ml-[33px] flex w-[36px] flex-col bg-[#475064]">
      <Slot className="h-[8px] items-start border-b border-[#7c869a]"><div className="h-px w-[22px] bg-[#fb6a27]" /></Slot>
      <Slot className="h-[38px] border-b border-[#7c869a]">
        <svg width="24" height="24" viewBox="0 0 24 24" fill="none">
          <circle cx="12" cy="12" r="11.800" fill="#fb5e27" />
          <rect x="9.500" y="5" width="5" height="9" rx="2.500" fill="#fff" />
          <path d="M7.500 10.500v2a4.500 4 0 009 0v-2M12 16.500V19M9.500 19h5" stroke="#fff" strokeWidth="1.300" />
          <path d="M7 17L17 5" stroke="#fb5e27" strokeWidth="3" />
          <path d="M7.500 16.500l9-10.500" stroke="#fff" strokeWidth="1.300" />
        </svg>
      </Slot>
      <Slot className="h-[38px] border-b border-[#7c869a]">
        <svg width="24" height="24" viewBox="0 0 24 24" fill="none" stroke="#475064">
          <circle cx="12" cy="12" r="11.800" fill="#eceeed" stroke="none" />
          <rect x="5.500" y="5.500" width="13" height="13" rx="1.500" strokeWidth="1.200" />
          <path d="M5.500 9.500h13M5.500 8h13" />
        </svg>
      </Slot>
      <Slot className="h-[37px]">
        <svg width="24" height="24" viewBox="0 0 24 24" fill="none">
          <circle cx="12" cy="12" r="11.800" fill="#eceeed" />
          <path d="M8.500 13V3.500M11 12V2M13.500 12V2.500M16 12V4M18 13V6v8c0 4-2 6-5.500 6-3 0-4-2-7-6 0-1.500 1.500-2 3-.5" stroke="#475064" strokeWidth="1.100" />
          <path d="M12 21v-6.500H9.500L13.500 10l4 4.500H15V21z" fill="#0fb37d" />
        </svg>
      </Slot>
      <div className="h-[9px] bg-[repeating-linear-gradient(90deg,#3b455c_0_1px,#56617a_1px_4px)]" />
    </div>
  );
}

/* ---------- taskbar ---------- */

function TaskButton({ children, className = "w-[58px]" }: Kids) {
  return (
    <div className={`mr-[4px] flex h-[28px] shrink-0 justify-center overflow-hidden rounded-t-[3px] border-x border-t border-[#e6eef8] bg-gradient-to-br from-[#d3dfee] via-[#b3c4dc] to-[#a3b8d4] shadow-[0_0_0_1px_#55687f] ${className}`}>
      {children}
    </div>
  );
}

const Stack = ({ className = "" }: { className?: string }) => (
  <div className={`mr-[2px] h-[28px] shrink-0 border-r border-t border-r-[#55687f] border-t-[#e6eef8] bg-[#a9bdd8] ${className}`} />
);

function Taskbar() {
  return (
    <div className="flex h-[28px] shrink-0 items-end border-t border-[#101820] bg-[linear-gradient(90deg,#9aabc4_0,#8395b0_40px,#a6bddb_110px,#a8c2df_1130px,#8494ac_1180px,#8494ac_100%)]">
      <svg className="shrink-0" width="116" height="28" viewBox="0 661 116 28">
        <defs>
          <radialGradient id="orb" cx=".5" cy=".75" r=".7">
            <stop offset="0" stopColor="#5fb6e6" />
            <stop offset=".7" stopColor="#1d4f83" />
            <stop offset="1" stopColor="#5c7795" />
          </radialGradient>
          <linearGradient id="ie" x2="0" y2="1">
            <stop offset="0" stopColor="#8fdcf6" />
            <stop offset="1" stopColor="#1f92da" />
          </linearGradient>
        </defs>
        <circle cx="21" cy="680" r="17" fill="url(#orb)" stroke="#2d4661" />
        <path d="M7 673c4-10 24-10 28 0-8 4-20 3-28 0z" fill="#c4d4e4" opacity=".5" />
        <path d="M12 673c3-3 6-3 9-1l-2 8c-3-2-6-1-9 0z" fill="#ee6a2b" />
        <path d="M22 672c3 2 6 2 10 0l-3 8c-3 2-6 1-9 0z" fill="#9ccb4a" />
        <path d="M10 681c3-2 6-1 9 0l-2 8H8z" fill="#55b4ea" />
        <path d="M20 681c3 2 6 2 9 0l-2 8h-9z" fill="#fcd14a" />
        <path d="M94.500 685.500H76.500C75 666 94.500 666 94.500 685.500zM76.500 685v8" fill="none" stroke="url(#ie)" strokeWidth="5.500" />
        <path d="M70 690c-3-6 8-23 21-25 6-.5 5 3.500 3 7" fill="none" stroke="#f5c51d" strokeWidth="2.600" />
      </svg>
      <TaskButton>
        <svg width="34" height="28" viewBox="128 661 34 28" fill="none">
          <circle cx="145" cy="680" r="16" fill="#62bd82" />
          <g stroke="#fff" strokeWidth="1.400">
            <ellipse cx="145" cy="681" rx="4.500" ry="12" transform="rotate(-28 145 681)" />
            <ellipse cx="145" cy="681" rx="4.500" ry="12" transform="rotate(32 145 681)" />
            <ellipse cx="145" cy="681" rx="4.500" ry="12" transform="rotate(92 145 681)" />
          </g>
          <circle cx="145" cy="681" r="1.800" fill="#fff" />
        </svg>
      </TaskButton>
      <TaskButton>
        <svg width="34" height="28" viewBox="190 661 34 28">
          <rect x="191" y="664" width="32" height="30" rx="2" fill="#4a4a4a" />
          <path d="M199 673l16-5v6l-8 2.500 8 2.500v6l-16 5v-6l8-2.500-8-2.500z" fill="#ff9800" />
        </svg>
      </TaskButton>
      <TaskButton className="mr-[2px]! w-[54px]">
        <svg width="34" height="28" viewBox="250 661 34 28">
          <path d="M265 672h15v14h-15z" fill="#fff" stroke="#0f6fc6" strokeWidth="1.600" />
          <path d="M266 674l7 6 7-6" fill="none" stroke="#0f6fc6" strokeWidth="2" />
          <path d="M251 668l17-4v28l-17-3z" fill="#0f6fc6" />
          <ellipse cx="259.500" cy="680" rx="3.500" ry="4.800" fill="none" stroke="#fff" strokeWidth="2.500" />
        </svg>
      </TaskButton>
      <Stack className="mr-[4px]! w-[2px]" />
      <TaskButton>
        <svg width="34" height="28" viewBox="314 661 34 28">
          <path d="M316 669l2-2h10l2 3h17v22h-31z" fill="#e6cb6a" />
          <path d="M318 668h9l1 4h17v5h-27z" fill="#fff7d0" stroke="#cfae4e" />
          <path d="M317 675h29v14h-29z" fill="#f4e08f" stroke="#d1b452" />
          <path d="M320 667h3v2h-3z" fill="#19a22d" />
          <path d="M328 669h4v2h-4z" fill="#d03b2c" />
          <path d="M336 671h4v2h-4z" fill="#2a8bd8" />
          <path d="M320 684h21v7h-21z" fill="#a6dff0" stroke="#5fb4d4" />
          <path d="M323 679v8M319 683h8" stroke="#fff" />
        </svg>
      </TaskButton>
      <TaskButton className="mr-[2px]! w-[51px]">
        <svg width="34" height="28" viewBox="372 661 34 28" fill="none">
          <circle cx="389" cy="680" r="13" fill="#fff" />
          <circle cx="382" cy="673" r="7.500" fill="#fff" />
          <circle cx="389" cy="680" r="11.500" fill="#15adf0" />
          <circle cx="382" cy="673" r="6" fill="#15adf0" />
          <path d="M394 675.500c-1-4.500-10-4.500-10 0 0 5 10 3 10 8.500 0 5-10 5-11 0" stroke="#fff" strokeWidth="2.800" />
          <circle cx="399" cy="690" r="5" fill="#79b51c" stroke="#fff" />
        </svg>
      </TaskButton>
      <Stack className="w-[2px]" />
      <Stack className="mr-[3px]! w-[2px]" />
      <TaskButton>
        <svg width="34" height="28" viewBox="438 661 34 28">
          <path d="M455 663l7 7-7 8-7-8z" fill="#f07b7b" />
          <path d="M447 672l8 8-8 8-9-8z" fill="#82aef5" />
          <path d="M463 672l8 8-8 8-8-8z" fill="#86cf69" />
          <path d="M455 681l8 8-8 7-8-7z" fill="#f6d868" />
          <path d="M450 669l5 6v12M455 678l7 3" fill="none" stroke="#edf1f7" strokeWidth="2" />
          <circle cx="455" cy="675" r="2" fill="#edf1f7" />
        </svg>
      </TaskButton>
      <TaskButton>
        <svg width="34" height="28" viewBox="500 661 34 28">
          <circle cx="517" cy="680" r="15" fill="#fbd14b" />
          <path d="M504 672a15 15 0 007 22l6-8-7-4z" fill="#2fa45c" />
          <path d="M503.500 673l7 10 6-9 14.500 0a15 15 0 00-27.500-1z" fill="#d8432f" />
          <circle cx="517" cy="680" r="7" fill="#fff" />
          <circle cx="517" cy="680" r="5.600" fill="#4a85ee" />
        </svg>
      </TaskButton>
      <TaskButton>
        <svg width="34" height="28" viewBox="562 661 34 28">
          <path d="M566 666l25 2v17l-23 1z" fill="#dfe5e6" stroke="#96a2a8" />
          <path d="M568 668l21 2v13l-20 1z" fill="#1636b8" />
          <path d="M568 668l10 1-5 15h-4z" fill="#0c1f86" />
          <path d="M580 670l9 .5V678z" fill="#5b83ea" />
          <circle cx="587" cy="686" r="7" fill="#e3e3e3" stroke="#999" />
          <path d="M583 683l3 3-3 3M591 682l-3 3 3 3" fill="none" stroke="#23953c" strokeWidth="1.600" />
        </svg>
      </TaskButton>
      <TaskButton>
        <svg width="34" height="28" viewBox="624 661 34 28" fill="none">
          <g fill="#4fa4d4">
            <circle cx="641" cy="680" r="12" />
            <circle cx="641" cy="670.500" r="5.800" />
            <circle cx="632.500" cy="675" r="5.800" />
            <circle cx="649.500" cy="675" r="5.800" />
            <circle cx="632.500" cy="686" r="5.800" />
            <circle cx="649.500" cy="686" r="5.800" />
          </g>
          <g stroke="#fff" strokeWidth="2.400">
            <circle cx="641" cy="672.500" r="3" />
            <circle cx="634" cy="676.500" r="3" />
            <circle cx="648" cy="676.500" r="3" />
            <circle cx="634" cy="684.500" r="3" />
            <circle cx="648" cy="684.500" r="3" />
            <circle cx="641" cy="680.500" r="3" fill="#4fa4d4" />
          </g>
        </svg>
      </TaskButton>
      <TaskButton>
        <svg width="34" height="28" viewBox="686 661 34 28">
          <path d="M702 665h13v11h-13z" fill="#c4c4c4" stroke="#000" strokeWidth="1.400" />
          <path d="M704 667h9v7h-9z" fill="#0000e0" />
          <path d="M700 677h16l3-3v4l-3 3h-16z" fill="#c4c4c4" stroke="#000" />
          <path d="M691 680h13v11h-13z" fill="#c4c4c4" stroke="#000" strokeWidth="1.400" />
          <path d="M693 682h9v7h-9z" fill="#0000e0" />
          <path d="M709 669l-12 9h6l-8 8 14-8h-6z" fill="#ff0" stroke="#8a8a00" strokeWidth=".6" />
        </svg>
      </TaskButton>
      <div className="ml-auto flex h-[28px] items-start overflow-hidden">
        <svg width="92" height="28" viewBox="1180 661 92 28" fill="none">
          <path d="M1182.500 684h8l-4-4.500z" fill="#fff" />
          <path d="M1204.500 675v14M1205 675.500c3-1 4 1.500 7 0 2-1 4 0 5 0v8c-4 1-8-1-12 0z" fill="#f4f4f4" stroke="#333" strokeWidth=".8" />
          <circle cx="1213.500" cy="684" r="4.800" fill="#d83a2b" stroke="#fff" strokeWidth=".5" />
          <path d="M1211.500 682l4 4M1215.500 682l-4 4" stroke="#fff" strokeWidth="1.500" />
          <path d="M1234 677.500h8v8h-9v-4" fill="#5c6c84" stroke="#fff" strokeWidth="1.500" />
          <path d="M1228.500 675.500h4v4h-4zM1230.500 680v6h5M1236 688h7" stroke="#fff" strokeWidth="1.400" />
          <path d="M1252 679h3l4-4v13l-4-4h-3z" fill="#fff" stroke="#444" strokeWidth=".5" />
          <path d="M1261 679c1 1 1 4 0 5M1263 677c2 2 2 7 0 9M1265.500 675.500c3 3 3 9 0 12" stroke="#fff" />
        </svg>
        <div className="w-[74px] whitespace-nowrap pt-[3px] text-center text-[11.5px] leading-[16px] tracking-[-0.25px] text-white">
          12:03 PM
          <br />
          2/14/2019
        </div>
        <div className="h-[28px] w-[15px] border-l border-[#55607a] bg-gradient-to-br from-[#a9b4c6] to-[#6f7d95]" />
      </div>
    </div>
  );
}

export default function App() {
  return (
    <div className="relative flex h-[689px] w-[1361px] flex-col overflow-hidden bg-[#202020] font-['Noto_Sans','Open_Sans',sans-serif]">
      <div className="flex h-[661px] shrink-0">
        <div className="w-[70px] border-l border-t border-l-[#4a4a4a] border-t-[#6b6b6b]" />
        <div className="flex w-[1221px] flex-col border-t border-[#6b6b6b] bg-white">
          <TitleBar />
          <Tabs />
          <Ribbon />
          <FormulaBar />
          <Sheet />
          <SheetTabs />
          <StatusBar />
          <RemoteEdge />
        </div>
        <div className="flex w-[70px] items-start">
          <MeetingPanel />
        </div>
      </div>
      <Taskbar />

      <div className="absolute left-[413px] top-[-4px] flex h-[22px] w-[215px] items-center whitespace-nowrap border border-black bg-[#f0efc8] pl-[5px] text-[11px] tracking-[0.03px] text-[#111]">
        Click to save a picture to your desktop.
      </div>
      <div className="absolute left-[1199px] top-[488px] flex h-[17px] w-[70px] items-center border border-[#c0c0c0] bg-white pl-[4px] text-[10px] tracking-[-0.1px] text-[#666] shadow-sm">Row: 31</div>
      <svg className="absolute left-[1281px] top-[514px]" width="10" height="18" viewBox="0 0 10 18">
        <path d="M.5.800v14l3.500-3 2.500 5.500 2-1-2.500-5H11z" fill="#fff" stroke="#222" />
      </svg>
    </div>
  );
}
